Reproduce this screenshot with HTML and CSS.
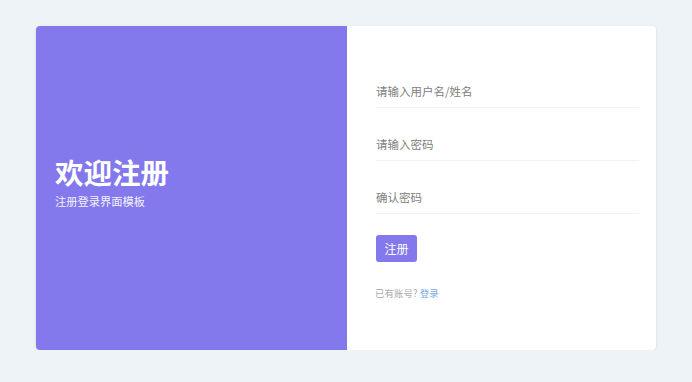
FILE: index.html
```html
<!DOCTYPE html>
<html lang="zh-CN">
<head>
    <meta charset="UTF-8">
    <meta name="viewport" content="width=device-width, initial-scale=1.0">
    <title>注册</title>
    <link rel="stylesheet" href="styles.css">
</head>
<body>
    <div class="card">
        <div class="welcome">
            <h1>欢迎注册</h1>
            <p>注册登录界面模板</p>
        </div>
        <form class="form">
            <input type="text" class="field" placeholder="请输入用户名/姓名">
            <input type="password" class="field" placeholder="请输入密码">
            <input type="password" class="field" placeholder="确认密码">
            <button type="button" class="button">注册</button>
            <p class="tip">已有账号? <a href="#">登录</a></p>
        </form>
    </div>
</body>
</html>
```

FILE: styles.css
```css
body {
    font-family: "Noto Sans CJK SC", "Noto Sans", sans-serif;
    background-color: #edf3f7;
    margin: 0;
    padding: 26px 0 0;
}
.card {
    display: flex;
    width: 620px;
    height: 324px;
    margin: 0 0 0 36px;
    background-color: #fff;
    border-radius: 4px;
    box-shadow: 0 1px 3px rgba(0, 0, 0, 0.12);
    overflow: hidden;
}
.welcome {
    width: 311px;
    background-color: #8378ec;
    color: #fff;
    display: flex;
    flex-direction: column;
    justify-content: center;
    padding: 0 0 14px 19px;
    box-sizing: border-box;
}
.welcome h1 {
    margin: 0 0 3px;
    font-size: 28.5px;
    font-weight: bold;
    line-height: 36px;
}
.welcome p {
    margin: 0;
    font-size: 11.25px;
    line-height: 16px;
    opacity: 0.9;
}
.form {
    flex: 1;
    padding: 48px 17px 0 29px;
}
.field {
    display: block;
    width: 100%;
    height: 34px;
    margin: 0 0 19px;
    padding: 0;
    border: none;
    border-bottom: 1px solid #f2f2f2;
    font-family: inherit;
    font-size: 11.5px;
    outline: none;
    color: #333;
    box-sizing: border-box;
}
.field::placeholder {
    color: #808080;
}
.button {
    display: block;
    margin: 21px 0 0;
    width: 41px;
    height: 27px;
    padding: 0;
    background-color: #8378ec;
    color: #fff;
    border: none;
    border-radius: 3px;
    font-family: inherit;
    font-size: 12px;
    cursor: pointer;
}
.tip {
    margin: 23px 0 0 -1px;
    font-size: 9.5px;
    line-height: 16px;
    color: #aaa;
}
.tip a {
    color: #7aa7e0;
    text-decoration: none;
}
```
